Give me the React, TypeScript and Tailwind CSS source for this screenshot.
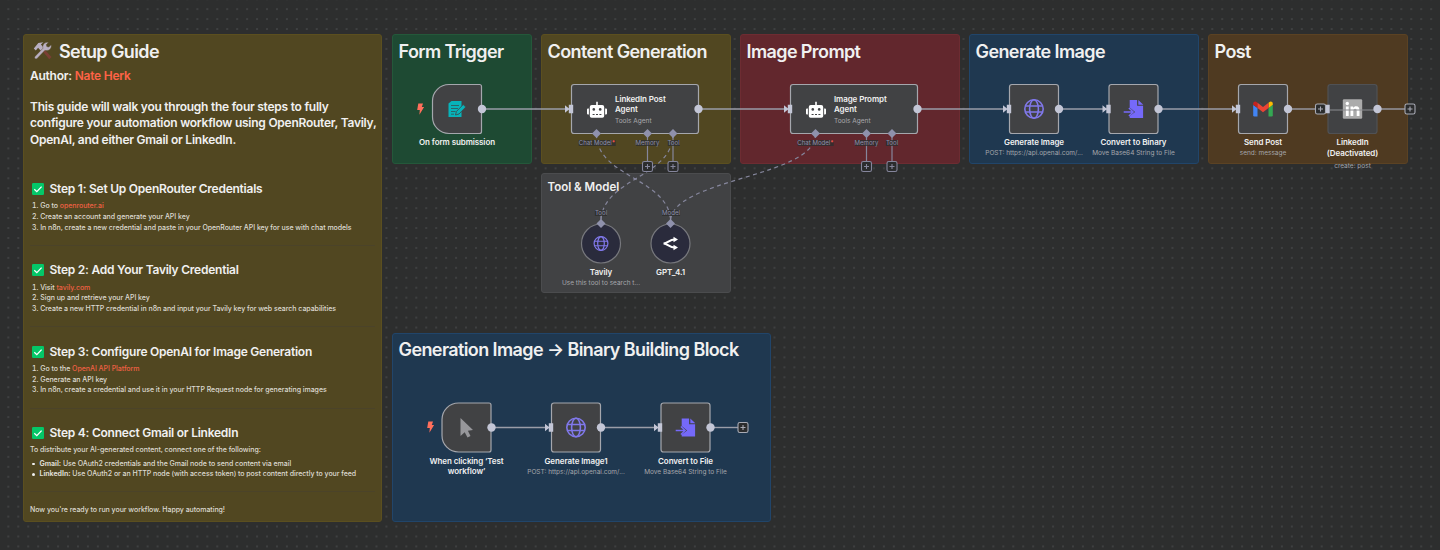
import React from "react";

type NoteProps = { x: number; y: number; w: number; h: number; tone: string; title: string; small?: boolean };

function Note({ x, y, w, h, tone, title, small }: NoteProps) {
  return (
    <section className={`absolute rounded-[3px] border px-[5.500px] ${small ? "pt-[5.500px]" : "pt-[3.500px]"} ${tone}`} style={{ left: x, top: y, width: w, height: h }}>
      <h2 className={small ? "text-[11.500px] leading-[14px] font-semibold whitespace-nowrap text-[#f0f0f0]" : "text-[18px] leading-[25px] font-semibold tracking-[-0.600px] whitespace-nowrap text-[#f0f0f0]"}>{title}</h2>
    </section>
  );
}

function Check() {
  return (
    <svg className="size-[12px] shrink-0" viewBox="0 0 12 12">
      <rect width="12" height="12" rx="1.2" fill="#04c768" />
      <path d="M2.3 6.3 4.8 8.7 9.6 3.6" fill="none" stroke="#fff" strokeWidth="1.3" />
    </svg>
  );
}

function Tools() {
  return (
    <svg className="h-[18px] w-[19px] shrink-0" viewBox="0 0 19 18">
      <path d="m8.2 7.500 2-1.600 8.300 9.200-2.300 2.200z" fill="#7a3f34" />
      <path d="m.8 6.500 4.500-5.600 5-.6-2.400 2.300 2.900 3.200-3 2.900-2.700-2.900-2.300 2.600z" fill="#b9afc0" />
      <path d="m3.800 16.800 8-8.400c2.400.5 5-.1 6.100-2.400.5-1.100.5-2.200.2-3.200l-2.300 2.300-2-.5-.5-2L15.500.5c-2.500-.6-5.300.8-5.700 3.600-.1.7 0 1.400.2 2.100L2 14.400c-1.200 1.700.3 3 1.800 2.400z" fill="#b9afc0" stroke="#514721" strokeWidth=".4" />
    </svg>
  );
}

const link = "text-[#ee6044]";

function Step({ title, children }: { title: string; children: React.ReactNode }) {
  return (
    <div className="h-[81.400px]">
      <h3 className="flex h-[18px] items-center gap-[5.500px] pl-[2px] text-[12px] font-semibold tracking-[-0.240px] whitespace-nowrap text-[#f0f0f0]"><Check />{title}</h3>
      {children}
    </div>
  );
}

function Steps({ children }: { children: React.ReactNode }) {
  return <ol className="mt-[3.300px] list-inside list-decimal pl-[2px] text-[7px] leading-[10.700px] font-medium tracking-[-0.040px] whitespace-nowrap">{children}</ol>;
}

function Rule() {
  return <hr className="mt-[11.500px] border-[#4b4329]" />;
}

function Guide() {
  return (
    <section className="absolute top-[34px] left-[23px] h-[488px] w-[359px] rounded-[3px] border border-[#5b4f1f] bg-[#514721] px-[6px] pt-[3.500px] text-[#dedbd2]">
      <h1 className="flex h-[25px] items-center gap-[7px] pl-[3px] text-[18px] font-semibold tracking-[-0.600px] whitespace-nowrap text-[#f0f0f0]"><Tools />Setup Guide</h1>
      <p className="mt-[4.500px] text-[12px] leading-[16px] font-semibold tracking-[-0.240px] text-[#f0f0f0]">Author: <span className="text-[#ff6347]">Nate Herk</span></p>
      <p className="mt-[15px] text-[12px] leading-[16.300px] font-semibold tracking-[-0.250px] whitespace-nowrap text-[#f0f0f0]">This guide will walk you through the four steps to fully<br />configure your automation workflow using OpenRouter, Tavily,<br />OpenAI, and either Gmail or LinkedIn.</p>
      <div className="mt-[32px]">
        <Step title="Step 1: Set Up OpenRouter Credentials">
          <Steps><li>Go to <span className={link}>openrouter.ai</span></li><li>Create an account and generate your API key</li><li>In n8n, create a new credential and paste in your OpenRouter API key for use with chat models</li></Steps>
          <Rule />
        </Step>
        <Step title="Step 2: Add Your Tavily Credential">
          <Steps><li>Visit <span className={link}>tavily.com</span></li><li>Sign up and retrieve your API key</li><li>Create a new HTTP credential in n8n and input your Tavily key for web search capabilities</li></Steps>
          <Rule />
        </Step>
        <Step title="Step 3: Configure OpenAI for Image Generation">
          <Steps><li>Go to the <span className={link}>OpenAI API Platform</span></li><li>Generate an API key</li><li>In n8n, create a credential and use it in your HTTP Request node for generating images</li></Steps>
          <Rule />
        </Step>
        <Step title="Step 4: Connect Gmail or LinkedIn">
          <p className="mt-[3.300px] text-[7px] leading-[10.700px] font-medium tracking-[-0.040px]">To distribute your AI-generated content, connect one of the following:</p>
          <ul className="mt-[2.500px] text-[7px] leading-[10.700px] font-medium tracking-[-0.040px] whitespace-nowrap">
            <li className="flex items-center gap-[5px] pl-[2px]"><i className="size-[2.500px] rounded-full bg-[#f0f0f0]" /><span><b>Gmail:</b> Use OAuth2 credentials and the Gmail node to send content via email</span></li>
            <li className="flex items-center gap-[5px] pl-[2px]"><i className="size-[2.500px] rounded-full bg-[#f0f0f0]" /><span><b>LinkedIn:</b> Use OAuth2 or an HTTP node (with access token) to post content directly to your feed</span></li>
          </ul>
          <Rule />
          <p className="mt-[12.500px] text-[7px] leading-[10.700px] font-medium tracking-[-0.040px]">Now you're ready to run your workflow. Happy automating!</p>
        </Step>
      </div>
    </section>
  );
}

function Globe({ x, y, s }: { x: number; y: number; s: number }) {
  return (
    <g transform={`translate(${x} ${y}) scale(${s / 20})`} fill="none" stroke="#8078ea" strokeWidth="1.600">
      <circle r="9.200" /><ellipse rx="4.400" ry="9.200" /><path d="M-8.700-3H8.700M-8.700 3H8.700" />
    </g>
  );
}

function FileIn({ x, y }: { x: number; y: number }) {
  return (
    <g transform={`translate(${x} ${y})`} fill="#7569fa">
      <path d="M-3.800-9H3.600V-3.200H9.600V9H-3.800V6.900L1.600 3-3.800-1.500z" />
      <path d="M4.800-9 9.800-4.200H4.800z" />
      <path d="M-9.800 3H-.8M-4.600-1 -.4 3-4.600 7" fill="none" stroke="#7569fa" strokeWidth="1.500" />
    </g>
  );
}

function Robot({ x, y }: { x: number; y: number }) {
  return (
    <g transform={`translate(${x} ${y})`}>
      <path d="M-.8-8.200H.8V-5H5.200A2 2 0 0 1 7.200-3V6A1.800 1.800 0 0 1 5.400 7.800H-5.400A1.800 1.800 0 0 1-7.200 6V-3A2 2 0 0 1-5.200-5H-.8zM-10-.5a1 1 0 0 1 1-1h.9V4.500H-9a1 1 0 0 1-1-1zM10-.5a1 1 0 0 0-1-1h-.9V4.500H9a1 1 0 0 0 1-1z" fill="#fff" />
      <g fill="#414244"><circle cx="-3.200" r="1.300" cy="-.6" /><circle cx="3.200" r="1.300" cy="-.6" /><path d="M-4.400 3.900h2v1.200h-2zM-1 3.900h2v1.200h-2zM2.400 3.900h2v1.200h-2z" /></g>
    </g>
  );
}

function Bolt({ x, y }: { x: number; y: number }) {
  return <path transform={`translate(${x} ${y})`} d="M-2.200-5.500H2.500L1.300-1.900H3.600L-1.100 5.800-.7.900H-3.300z" fill="#ff6f5c" />;
}

function Plus({ x, y, c }: { x: number; y: number; c: string }) {
  return (
    <g transform={`translate(${x} ${y})`} fill="none" stroke={c} strokeWidth="1.100">
      <rect x="-5" y="-5" width="10" height="10" rx="1.800" fill="#2b2c2d" /><path d="M-2.500 0h5M0-2.500v5" />
    </g>
  );
}

function Box({ x, y, trigger, off }: { x: number; y: number; trigger?: boolean; off?: boolean }) {
  const shape = trigger ? "M-8-24.500H22.500A2 2 0 0 1 24.500-22.500V22.500A2 2 0 0 1 22.500 24.500H-8A16.500 16.500 0 0 1-24.500 8V-8A16.500 16.500 0 0 1-8-24.500z" : "M-22-24.500H22A2.500 2.500 0 0 1 24.500-22V22A2.500 2.500 0 0 1 22 24.500H-22A2.500 2.500 0 0 1-24.500 22V-22A2.500 2.500 0 0 1-22-24.500z";
  return <path transform={`translate(${x} ${y})`} d={shape} fill="#414244" stroke={off ? "#505154" : "#a5a7ad"} strokeWidth="1.200" />;
}

function Wire({ from, to, y }: { from: number; to: number; y: number }) {
  return <path d={`M${from} ${y}H${to}`} stroke="#9a9da8" strokeWidth="1.400" />;
}

function Input({ x, y }: { x: number; y: number }) {
  return <path transform={`translate(${x} ${y})`} d="M-6-3.800-1.500 0-6 3.800zM-2.200-4.300H2.200V4.300H-2.200z" fill="#c3c6d6" />;
}

function Diamond({ x, y }: { x: number; y: number }) {
  return <path transform={`translate(${x} ${y})`} d="M0-4.500 4.500 0 0 4.500-4.500 0z" fill="#8f91ac" />;
}

function Diagram() {
  const dash = { stroke: "#85869c", strokeWidth: 1.200, strokeDasharray: "4 3.500", fill: "none" };
  return (
    <svg className="absolute inset-0" width="1440" height="550" viewBox="0 0 1440 550">
      <Wire from={482} to={568} y={109} /><Wire from={698} to={787} y={109} /><Wire from={917} to={1006} y={109} />
      <Wire from={1059} to={1105} y={109} /><Wire from={1158} to={1234} y={109} /><Wire from={1288} to={1316} y={109} /><Wire from={1377} to={1405} y={109} />
      <Wire from={491} to={548} y={427.500} /><Wire from={601} to={657} y={427.500} /><Wire from={710} to={738} y={427.500} />
      <path {...dash} d="M596.500 134C596.500 178 670.500 178 670.500 222" />
      <path {...dash} d="M673 134C673 178 601 178 601 222" />
      <path {...dash} d="M815.500 134C815.500 178 670.500 178 670.500 222" />
      <path d="M647.500 134V162M673 134V162M866.500 134V162M892 134V162M601 216V224M670.500 216V224" stroke="#85869c" strokeWidth="1.200" />

      <Box x={457} y={109} trigger /><Box x={1034} y={109} /><Box x={1133.500} y={109} /><Box x={1263} y={109} /><Box x={1352.500} y={109} off />
      <Box x={466.500} y={427.500} trigger /><Box x={576} y={427.500} /><Box x={685.500} y={427.500} />
      <rect x="571.500" y="84.500" width="127" height="49" rx="2.500" fill="#414244" stroke="#a5a7ad" strokeWidth="1.200" />
      <rect x="790.500" y="84.500" width="127" height="49" rx="2.500" fill="#414244" stroke="#a5a7ad" strokeWidth="1.200" />
      <circle cx="601" cy="243.500" r="19.500" fill="#2a2b3c" stroke="#77787d" strokeWidth="1.200" /><circle cx="670.500" cy="243.500" r="19.500" fill="#2a2b3c" stroke="#77787d" strokeWidth="1.200" />

      <Bolt x={420.500} y={109} /><Bolt x={430.500} y={427} />
      <g transform="translate(457 109)">
        <path d="M-8.500-5.500-5.500-8H4.500V8H-8.500z" fill="#07b3ba" />
        <path d="M-6-3.500H2M-6-.5H1M-6 2.500H-1.500M-6 5.200H-3" stroke="#2c6468" strokeWidth="1" />
        <path d="M-1.500 6-.6 2.500 6.200-4.400 8.800-2 2 5z" fill="#07b3ba" stroke="#414244" strokeWidth=".8" />
      </g>
      <path d="M460.500 418V436L464.700 432.200 467.500 437.500 470.500 436 467.900 430.800 473 430z" fill="#97979b" />
      <Robot x={597} y={110} /><Robot x={816} y={110} />
      <Globe x={1034} y={109} s={20} /><Globe x={576} y={427.500} s={20} /><Globe x={601} y={243.500} s={15} />
      <FileIn x={1133.500} y={109} /><FileIn x={685.500} y={427.500} />
      <g transform="translate(1263 109)">
        <path d="M-9.800-4-5.500-1V7.500H-8.500Q-9.800 7.500-9.800 6.200z" fill="#4285f4" /><path d="M9.800-4 5.500-1V7.500H8.500Q9.800 7.500 9.800 6.200z" fill="#34a853" />
        <path d="M-9.800-4.200V-5.200C-9.800-7.300-7.600-8-6.200-6.800L-5.500-6.200V-1z" fill="#c5221f" /><path d="M9.800-4.200V-5.200C9.800-7.300 7.600-8 6.200-6.800L5.500-6.200V-1z" fill="#fbbc04" />
        <path d="M-5.500-6.200 0-2 5.500-6.200V-1L0 3.200-5.500-1z" fill="#ea4335" />
      </g>
      <g transform="translate(1352.500 109)">
        <rect x="-9.700" y="-9.700" width="19.400" height="19.400" rx="1.200" fill="#ababab" />
        <circle cx="-5.200" cy="-5.500" r="1.700" fill="#fff" /><path d="M-6.600-2.400h2.800V7h-2.800zM-2-2.400H.7v1.300C1.300-2.100 2.300-2.700 3.600-2.700 6.300-2.700 7-.9 7 1.700V7H4.200V2.300C4.200 1 4.100-.2 2.600-.2 1.200-.2.800.9.800 2.200V7H-2z" fill="#fff" />
      </g>
      <path d="M1330 110H1377" stroke="#8b8c90" strokeWidth="1" />
      <g transform="translate(670.500 243.500)" fill="none" stroke="#fff" strokeWidth="2"><path d="M-7 0C-3 0-1-4 4-4M-7 0C-3 0-1 4 4 4" /><path d="M3-6.800 7.500-4 3-1.200zM3 6.800 7.500 4 3 1.200z" fill="#fff" stroke="none" /></g>

      {[571, 790, 1009, 1108.500, 1238, 1327.500].map((x) => <Input key={x} x={x} y={109} />)}
      {[551, 660].map((x) => <Input key={x} x={x} y={427.500} />)}
      {[482, 698.500, 917.500, 1059, 1158.500, 1288, 1377.500].map((x) => <circle key={x} cx={x} cy="109" r="4.200" fill="#c3c6d6" />)}
      {[491.500, 601, 710.500].map((x) => <circle key={x} cx={x} cy="427.500" r="4.200" fill="#c3c6d6" />)}
      {[596.500, 647.500, 673, 815.500, 866.500, 892].map((x) => <Diamond key={x} x={x} y={133.500} />)}
      <Diamond x={601} y={223.500} /><Diamond x={670.500} y={223.500} />
      {[647.500, 673, 866.500, 892].map((x) => <Plus key={x} x={x} y={166.500} c="#85869c" />)}
      <Plus x={1320.500} y={109} c="#a9abb5" /><Plus x={1410} y={109} c="#a9abb5" /><Plus x={743} y={427.500} c="#a9abb5" />
    </svg>
  );
}

function Label({ x, y, title, sub, wide }: { x: number; y: number; title: string[]; sub?: string; wide?: boolean }) {
  return (
    <div className="absolute flex w-[130px] -translate-x-1/2 flex-col items-center gap-[1px] whitespace-nowrap" style={{ left: x, top: y }}>
      <div className={`flex flex-col items-center text-[8px] font-semibold tracking-[-0.090px] text-[#f0f0f0] ${wide ? "leading-[11.500px]" : "leading-[10px]"}`}>
        {title.map((t) => <span key={t}>{t}</span>)}
      </div>
      {sub && <span className="text-[6.500px] leading-[10px] text-[#a5a6ab]">{sub}</span>}
    </div>
  );
}

function Agent({ x, lines }: { x: number; lines: string[] }) {
  return (
    <div className="absolute top-[94px] flex flex-col gap-[1.500px] whitespace-nowrap" style={{ left: x }}>
      <div className="flex flex-col text-[8px] leading-[10px] font-semibold tracking-[-0.100px] text-[#f0f0f0]">
        {lines.map((t) => <span key={t}>{t}</span>)}
      </div>
      <span className="text-[6.500px] leading-[11px] text-[#a9aaae]">Tools Agent</span>
    </div>
  );
}

function Port({ x, y, text, required }: { x: number; y: number; text: string; required?: boolean }) {
  return <span className="absolute -translate-x-1/2 bg-[#2d2e2e]/80 text-[6.100px] leading-[6px] whitespace-nowrap text-[#8f91ac]" style={{ left: x, top: y }}>{text}{required && <b className="text-[#f5524a]">*</b>}</span>;
}

export default function App() {
  return (
    <main className="relative h-[550px] w-[1440px] overflow-hidden bg-[#2d2e2e] font-['Inter',sans-serif]">
      <svg className="absolute inset-0" width="1440" height="550">
        <defs><pattern id="dots" x="3.350" y="4.150" width="9.950" height="9.950" patternUnits="userSpaceOnUse"><circle cx="4.975" cy="4.975" r=".7" fill="#5b5c60" /></pattern></defs>
        <rect width="1440" height="550" fill="url(#dots)" />
      </svg>
      <Guide />
      <Note x={392} y={34} w={140} h={130} tone="border-[#24583a] bg-[#1e4a33]" title="Form Trigger" />
      <Note x={541} y={34} w={190} h={130} tone="border-[#5b4f1f] bg-[#514721]" title="Content Generation" />
      <Note x={740} y={34} w={220} h={130} tone="border-[#6d2c32] bg-[#62272d]" title="Image Prompt" />
      <Note x={969} y={34} w={230} h={130} tone="border-[#21456a] bg-[#1f3850]" title="Generate Image" />
      <Note x={1208} y={34} w={200} h={130} tone="border-[#5b4223] bg-[#4f3a21]" title="Post" />
      <Note x={541} y={173} w={190} h={120} tone="border-[#4b4c4e] bg-[#414244]" title="Tool & Model" small />
      <Note x={392} y={332.500} w={379} h={189} tone="border-[#21456a] bg-[#1f3850]" title="Generation Image → Binary Building Block" />
      <Diagram />
      <Agent x={615} lines={["LinkedIn Post", "Agent"]} />
      <Agent x={834} lines={["Image Prompt", "Agent"]} />
      <Label x={457} y={137} title={["On form submission"]} />
      <Label x={1034} y={137} title={["Generate Image"]} sub="POST: https://api.openai.com/..." />
      <Label x={1133.500} y={137} title={["Convert to Binary"]} sub="Move Base64 String to File" />
      <Label x={1263} y={137} title={["Send Post"]} sub="send: message" />
      <Label x={1352.500} y={136.500} title={["LinkedIn", "(Deactivated)"]} sub="create: post" wide />
      <Label x={466.500} y={455.500} title={["When clicking ‘Test", "workflow’"]} />
      <Label x={576} y={455.500} title={["Generate Image1"]} sub="POST: https://api.openai.com/..." />
      <Label x={685.500} y={455.500} title={["Convert to File"]} sub="Move Base64 String to File" />
      <Label x={601} y={266.500} title={["Tavily"]} sub="Use this tool to search t..." />
      <Label x={670.500} y={266.500} title={["GPT_4.1"]} />
      <Port x={597} y={139.500} text="Chat Model" required /><Port x={647.500} y={139.500} text="Memory" /><Port x={673.500} y={139.500} text="Tool" />
      <Port x={815.500} y={139.500} text="Chat Model" required /><Port x={866.500} y={139.500} text="Memory" /><Port x={892} y={139.500} text="Tool" />
      <Port x={601} y={209.500} text="Tool" /><Port x={671} y={209.500} text="Model" />
    </main>
  );
}
